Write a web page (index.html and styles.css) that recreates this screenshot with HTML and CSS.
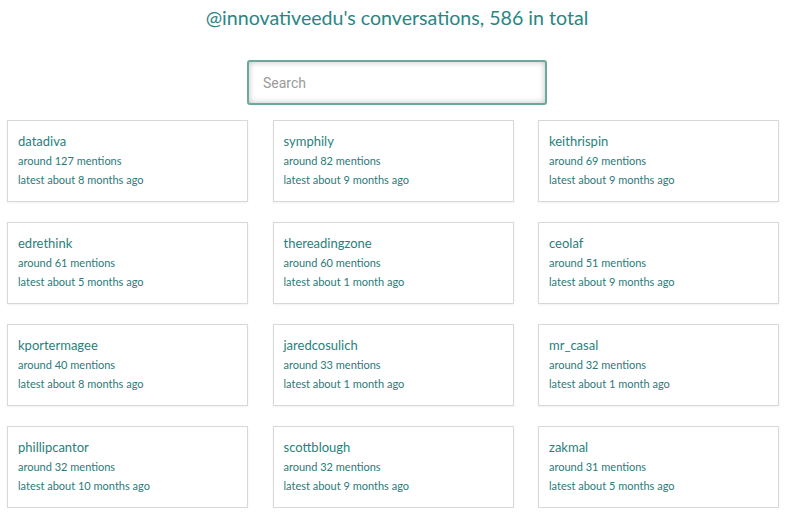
FILE: index.html
```html
<!DOCTYPE html>
<html>
<head>
<meta charset="utf-8">
<link rel="stylesheet" href="styles.css">
</head>
<body>
<h1 class="title">@innovativeedu's conversations, 586 in total</h1>
<div class="search-wrap"><input class="search" type="text" placeholder="Search"></div>
<div class="grid">
  <div class="card"><div class="name">datadiva</div><div class="meta">around 127 mentions</div><div class="meta">latest about 8 months ago</div></div>
  <div class="card"><div class="name">symphily</div><div class="meta">around 82 mentions</div><div class="meta">latest about 9 months ago</div></div>
  <div class="card"><div class="name">keithrispin</div><div class="meta">around 69 mentions</div><div class="meta">latest about 9 months ago</div></div>
  <div class="card"><div class="name">edrethink</div><div class="meta">around 61 mentions</div><div class="meta">latest about 5 months ago</div></div>
  <div class="card"><div class="name">thereadingzone</div><div class="meta">around 60 mentions</div><div class="meta">latest about 1 month ago</div></div>
  <div class="card"><div class="name">ceolaf</div><div class="meta">around 51 mentions</div><div class="meta">latest about 9 months ago</div></div>
  <div class="card"><div class="name">kportermagee</div><div class="meta">around 40 mentions</div><div class="meta">latest about 8 months ago</div></div>
  <div class="card"><div class="name">jaredcosulich</div><div class="meta">around 33 mentions</div><div class="meta">latest about 1 month ago</div></div>
  <div class="card"><div class="name">mr_casal</div><div class="meta">around 32 mentions</div><div class="meta">latest about 1 month ago</div></div>
  <div class="card"><div class="name">phillipcantor</div><div class="meta">around 32 mentions</div><div class="meta">latest about 10 months ago</div></div>
  <div class="card"><div class="name">scottblough</div><div class="meta">around 32 mentions</div><div class="meta">latest about 9 months ago</div></div>
  <div class="card"><div class="name">zakmal</div><div class="meta">around 31 mentions</div><div class="meta">latest about 5 months ago</div></div>
</div>
</body>
</html>
```
FILE: styles.css
```css
html, body { margin: 0; padding: 0; background: #fff; }
body {
  font-family: Lato, "Open Sans", sans-serif;
  color: #2b7f7b;
  padding: 0 8px 0 7px;
}
.title {
  margin: 0;
  padding: 6px 0 0 8px;
  height: 54px;
  font-size: 19.6px;
  font-weight: 400;
  line-height: 24px;
  text-align: center;
  color: #2a8682;
}
.search-wrap {
  display: flex;
  justify-content: center;
  margin-left: 8px;
}
.search {
  box-sizing: border-box;
  width: 300px;
  height: 45px;
  border: 2px solid #6aaa9c;
  border-radius: 3px;
  box-shadow: inset 0 0 6px rgba(0,0,0,0.25);
  padding: 0 14px;
  font-family: Roboto, sans-serif;
  font-size: 14px;
  outline: none;
}
.search::placeholder { color: #9a9a9a; }
.grid {
  margin-top: 15px;
  display: grid;
  grid-template-columns: repeat(3, 1fr);
  column-gap: 24.5px;
  row-gap: 20px;
}
.card {
  box-sizing: border-box;
  height: 82px;
  border: 1px solid #d8d8d8;
  box-shadow: 0 1px 2px rgba(0,0,0,0.06);
  padding: 11px 10px 0 10px;
}
.name { font-size: 13px; line-height: 19px; color: #2a7f7b; }
.meta { font-size: 11px; line-height: 19px; color: #2b7a78; }
```
